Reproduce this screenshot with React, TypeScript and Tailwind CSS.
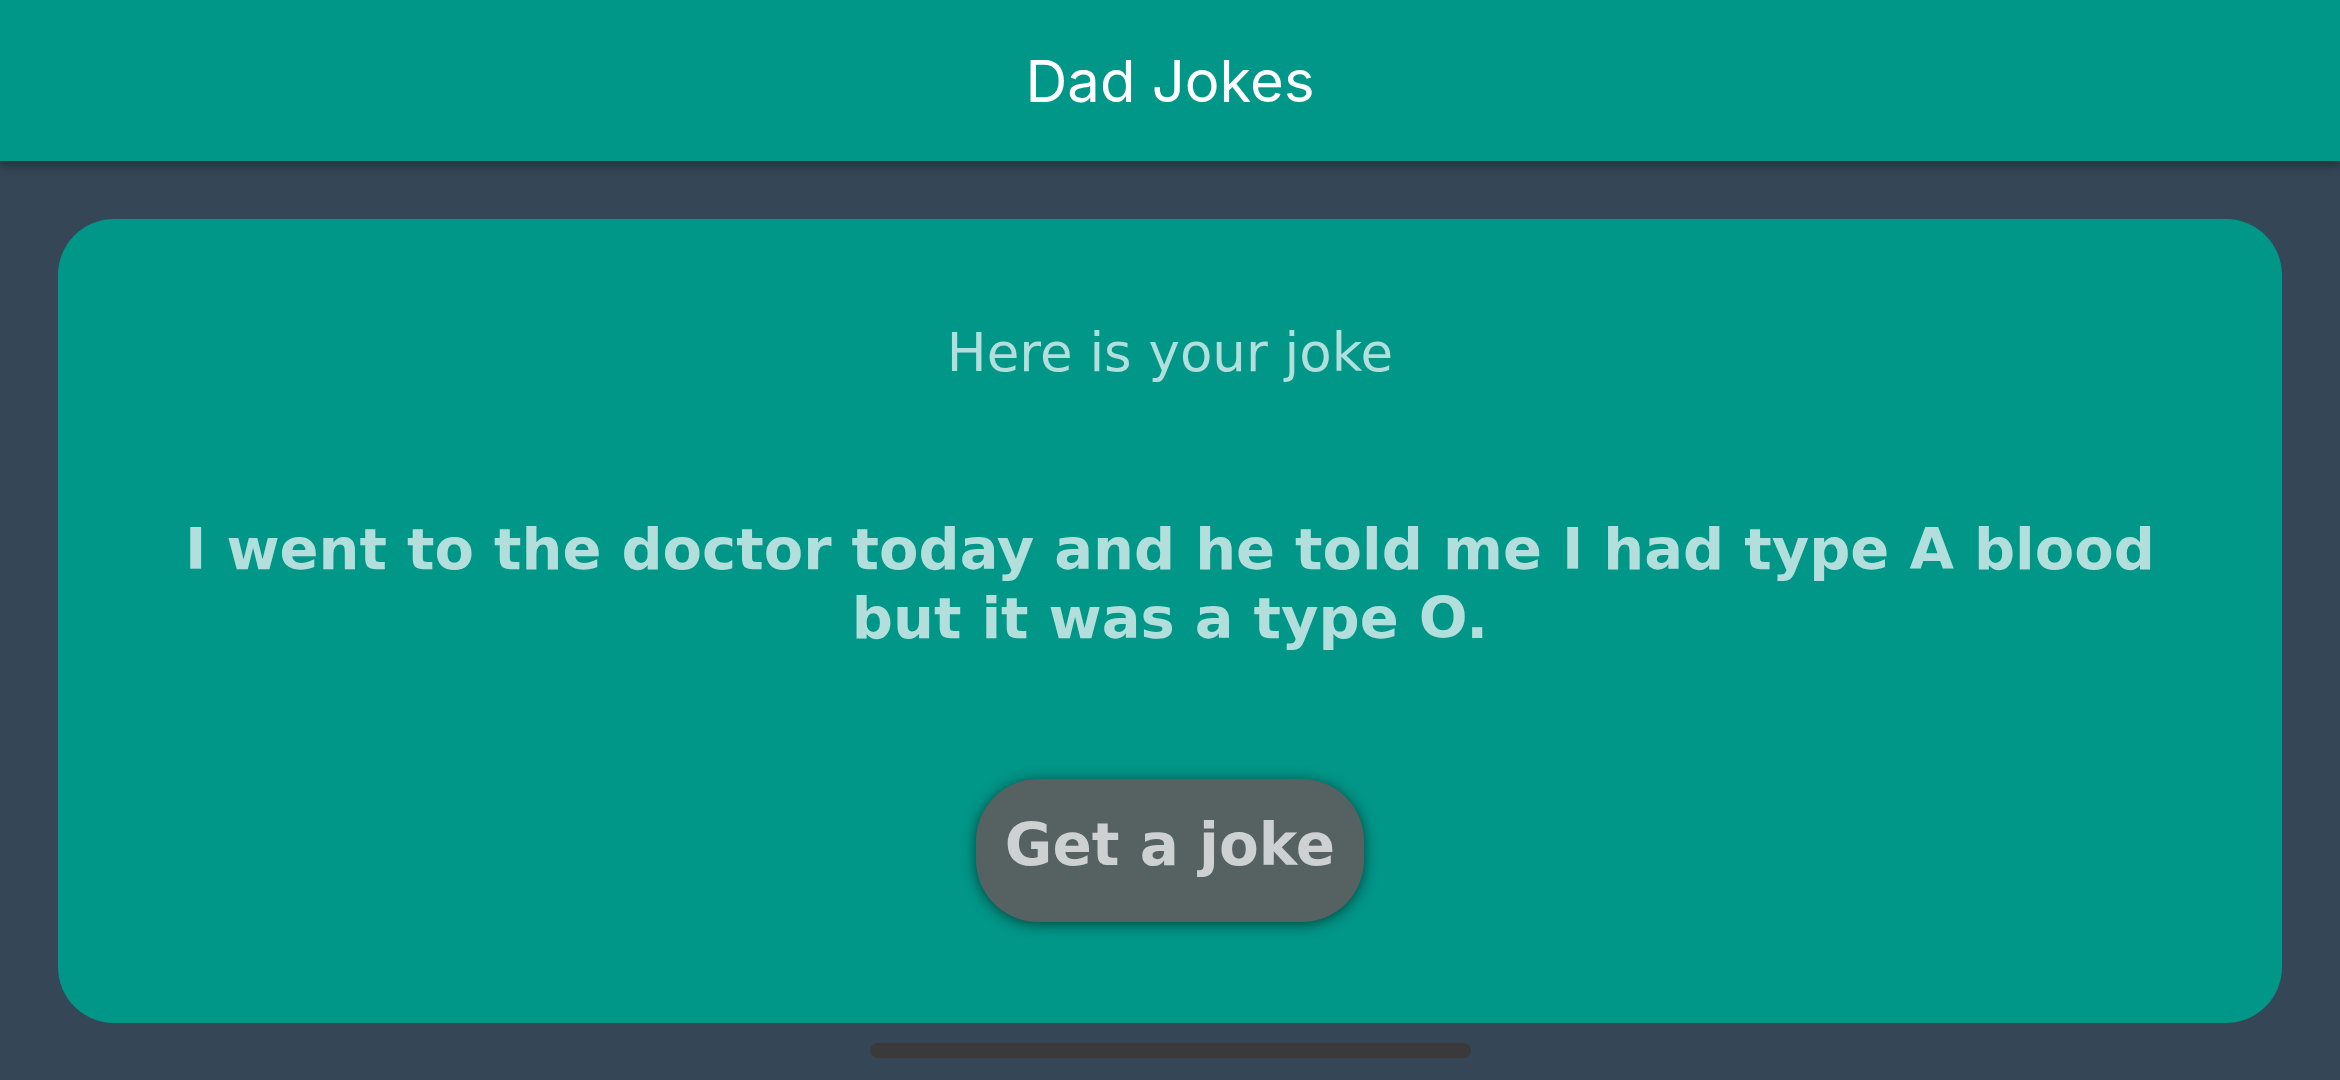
import React from 'react';

const joke = 'I went to the doctor today and he told me I had type A blood but it was a type O.';

const App = () => {
  return (
    <div className="h-[1080px] w-full bg-[#354656] flex flex-col overflow-hidden">
      {/* App bar */}
      <header className="h-[161px] shrink-0 bg-[#009688] flex items-center justify-center shadow-[0_4px_10px_rgba(0,0,0,0.35)] relative z-10">
        <h1 className="text-[58px] leading-none text-white font-['Inter',sans-serif] font-normal">Dad Jokes</h1>
      </header>

      {/* Joke card */}
      <main className="flex-1 flex flex-col px-[58px] pt-[58px]">
        <div className="h-[804px] bg-[#009688] rounded-[56px] flex flex-col items-center pt-[102px] px-[100px] font-['DejaVu_Sans','Verdana',sans-serif]">
          <p className="text-[53px] leading-[64px] text-[#b2dfdb]">Here is your joke</p>
          <p className="mt-[130px] text-[57.5px] leading-[69px] font-bold text-[#b2dfdb] text-center">{joke}</p>
          <button className="mt-[126px] h-[143px] w-[388px] rounded-[62px] bg-[#566161] text-[#cdd1d2] text-[58px] leading-[72px] font-bold pb-[11px] shadow-[0_2px_14px_rgba(0,0,0,0.55)]">
            Get a joke
          </button>
        </div>
        <div className="mx-auto mt-[20px] h-[15px] w-[601px] rounded-full bg-[#3a3a3a]" />
      </main>
    </div>
  );
};

export default App;
